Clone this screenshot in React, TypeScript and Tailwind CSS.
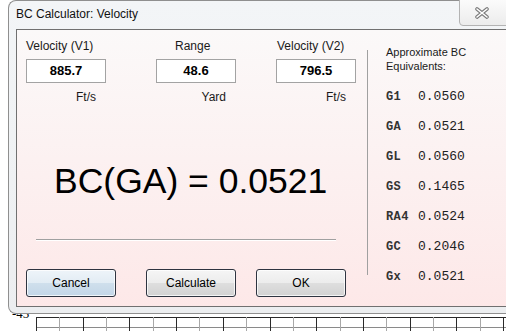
import React from "react";

const rows: [string, string][] = [
  ["G1", "0.0560"],
  ["GA", "0.0521"],
  ["GL", "0.0560"],
  ["GS", "0.1465"],
  ["RA4", "0.0524"],
  ["GC", "0.2046"],
  ["Gx", "0.0521"],
];

function Field({ label, value, unit, labelPad }: { label: string; value: string; unit: string; labelPad: string }) {
  return (
    <div className="w-[80px] flex flex-col">
      <div className={`text-[12px] leading-[14px] text-[#1a1a1a] whitespace-nowrap ${labelPad}`}>{label}</div>
      <div className="mt-[6px] h-[24px] border border-[#a3a3a3] bg-white text-center font-bold text-[13px] leading-[22px] text-black">
        {value}
      </div>
      <div className="mt-[7px] pr-[10px] text-right text-[12px] leading-[14px] text-[#1a1a1a]">{unit}</div>
    </div>
  );
}

function Btn({ label, blue }: { label: string; blue?: boolean }) {
  return (
    <div
      className={`w-[90px] h-[28px] rounded-[3px] border border-[#2e3440] flex items-center justify-center text-[12px] text-black shadow-[inset_0_0_0_1px_rgba(255,255,255,0.75)] ${
        blue
          ? "bg-[linear-gradient(to_bottom,#eef4f9_0%,#e2ecf4_50%,#cfdfec_51%,#c3d6e7_100%)]"
          : "bg-[linear-gradient(to_bottom,#f5f5f5_0%,#ececec_50%,#dedede_51%,#d2d2d2_100%)]"
      }`}
    >
      {label}
    </div>
  );
}

export default function App() {
  const xs: number[] = [];
  for (let i = 0; i < 21; i++) xs.push(36 + i * 23.35);
  return (
    <div
      className="w-[506px] h-[331px] overflow-hidden bg-white flex flex-col"
      style={{ fontFamily: '"Liberation Sans", Arial, sans-serif' }}
    >
      <div className="relative z-10 ml-[8px] h-[314px] shrink-0 rounded-tl-[8px] rounded-bl-[8px] border border-r-0 border-[#8f8f8f] bg-[linear-gradient(to_bottom,#f3f5f7,#eceef0)] flex flex-col">
        <div className="h-[28px] flex items-start justify-between">
          <div className="self-center pl-[7px] pb-[2px] text-[12px] text-[#111]">BC Calculator: Velocity</div>
          <div className="mt-[-2px] mr-[-6px] w-[53px] h-[27px] rounded-b-[4px] border border-[#b3b3b3] bg-[linear-gradient(to_bottom,#fbfbfb,#ececec)] flex items-center justify-center pr-[8px]">
            <svg width="16" height="12" viewBox="0 0 16 12">
              <path d="M3 2 L13 10 M13 2 L3 10" stroke="#7a7a7a" strokeWidth="3.6" strokeLinecap="round" fill="none" />
              <path d="M3 2 L13 10 M13 2 L3 10" stroke="#ffffff" strokeWidth="1.6" strokeLinecap="round" fill="none" />
            </svg>
          </div>
        </div>
        <div className="ml-[7px] h-[278px] border border-r-0 border-[#707070] bg-[linear-gradient(to_bottom,#fbf9f9,#fde8e8)] flex">
          <div className="w-[350px] flex flex-col">
            <div className="pt-[9px] ml-[9px] flex">
              <Field label="Velocity (V1)" value="885.7" unit="Ft/s" labelPad="pl-0" />
              <div className="ml-[50px]">
                <Field label="Range" value="48.6" unit="Yard" labelPad="pl-[19px]" />
              </div>
              <div className="ml-[40px]">
                <Field label="Velocity (V2)" value="796.5" unit="Ft/s" labelPad="pl-[1px]" />
              </div>
            </div>
            <div className="mt-[57px] pl-[37px] h-[40px] text-[35.5px] leading-[40px] text-black whitespace-nowrap">
              BC(GA) = 0.0521
            </div>
            <div className="mt-[38px] ml-[19px] w-[300px] h-[2px] border-t border-[#a0a0a0] border-b border-b-white" />
            <div className="mt-[28px] ml-[9px] flex">
              <Btn label="Cancel" blue />
              <div className="ml-[30px]">
                <Btn label="Calculate" />
              </div>
              <div className="ml-[20px]">
                <Btn label="OK" />
              </div>
            </div>
          </div>
          <div className="mt-[20px] w-px h-[225px] bg-[#a0a0a0]" />
          <div className="pl-[18px] pt-[15px] flex flex-col">
            <div className="text-[11px] leading-[14px] text-[#1a1a1a]">
              Approximate BC
              <br />
              Equivalents:
            </div>
            <div className="mt-[9px] flex flex-col">
              {rows.map(([k, v]) => (
                <div key={k} className="h-[30px] flex items-center text-[#222]" style={{ fontFamily: '"Liberation Mono", "Courier New", monospace' }}>
                  <span className="w-[32px] text-[12px] font-bold tracking-[0.4px] text-[#333]">{k}</span>
                  <span className="text-[13px]">{v}</span>
                </div>
              ))}
            </div>
          </div>
        </div>
      </div>
      <div className="relative flex-1">
        <span
          className="absolute left-[12px] top-[-7px] text-[13px] leading-[14px] text-black"
          style={{ fontFamily: '"Liberation Serif", "Times New Roman", serif' }}
        >
          -45
        </span>
        <svg width="506" height="17" className="block">
          <line x1="36" y1="3.5" x2="506" y2="3.5" stroke="#2a2a2a" strokeWidth="1" />
          <line x1="36" y1="13.5" x2="506" y2="13.5" stroke="#8a8a8a" strokeWidth="1" />
          {xs.map((x, i) => (
            <line
              key={i}
              x1={Math.round(x) + 0.5}
              y1="3"
              x2={Math.round(x) + 0.5}
              y2="17"
              stroke={i % 2 === 0 ? "#2a2a2a" : "#a8a8a8"}
              strokeWidth="1"
            />
          ))}
        </svg>
      </div>
    </div>
  );
}
